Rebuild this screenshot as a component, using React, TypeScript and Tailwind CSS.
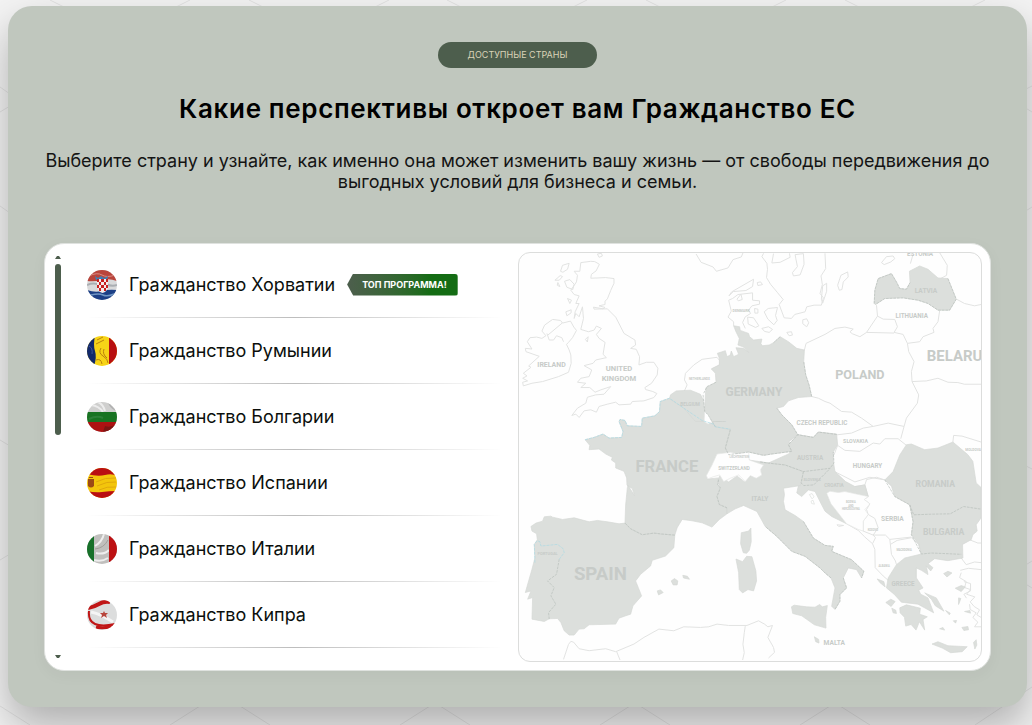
import type { ReactNode } from 'react';

interface Country {
  name: string;
  flag: ReactNode;
  top?: boolean;
}

const countries: Country[] = [
  {
    name: 'Гражданство Хорватии',
    top: true,
    flag: (
      <>
        <rect width="30" height="30" fill="#d9dadb" />
        <path d="M0 0h30v11Q22 8 15 10T0 11z" fill="#b9453c" />
        <path d="M2 6q8-4 13-1t13 0" stroke="#d98c84" fill="none" />
        <path d="M0 15q7-3 12 0M19 14q6 3 11 1" stroke="#aaaeb2" strokeWidth="2" fill="none" />
        <path d="M0 20q8 3 15 1t15-1v10H0z" fill="#1c3f86" />
        <path d="M4 25q8-2 12 0t11-1" stroke="#6f95c4" strokeWidth="1.5" fill="none" />
        <path d="M8 6l3 2 3-2 3 2 4-2-1 4H9z" fill="#3f7fb4" />
        <path d="M10 9h11v8q-1 5-5.500 6Q11 22 10 17z" fill="#f4ecec" />
        <path
          d="M10 9h2v3h-2zM14 9h3v3h-3zM19 9h2v3h-2zM12 12h2v3h-2zM17 12h2v3h-2zM10 15h2v3h-2zM14 15h3v3h-3zM19 15h2v3h-2zM12 18h2v3h-2zM17 18h2v3h-2z"
          fill="#c71f1f"
        />
      </>
    ),
  },
  {
    name: 'Гражданство Румынии',
    flag: (
      <>
        <rect width="30" height="30" fill="#f7d417" />
        <path d="M0 0h8q-2 9 0 15t-1 15H0z" fill="#12296b" />
        <path d="M22 0h8v30h-8z" fill="#b80f10" />
        <path d="M2 10q4 2 3 8" stroke="#3b5699" fill="none" />
        <path d="M14 12q-3 5 2 8t5 7M17 13q-2 5 3 9M10 4l6-3M9 8l8-4M9 24q5-2 6 4" stroke="#b9820d" fill="none" />
      </>
    ),
  },
  {
    name: 'Гражданство Болгарии',
    flag: (
      <>
        <rect width="30" height="30" fill="#cfcfce" />
        <path d="M4 3q8 1 12 7M11 0q5 2 7 9" stroke="#ececec" strokeWidth="2" fill="none" />
        <path d="M22 0q1 5 7 8" stroke="#b2b2b2" strokeWidth="2" fill="none" />
        <path d="M0 10h30v10H0z" fill="#187322" />
        <path d="M2 17q8-4 14-1" stroke="#2c7f37" strokeWidth="2" fill="none" />
        <path d="M0 20h30v10H0z" fill="#ad1212" />
        <path d="M18 24q5 2 12-2v8H16z" fill="#7d1512" />
      </>
    ),
  },
  {
    name: 'Гражданство Испании',
    flag: (
      <>
        <rect width="30" height="30" fill="#f3c60c" />
        <path d="M0 0h30v8q-5-3-12-1T0 6z" fill="#b90e12" />
        <path d="M0 23q8 2 15 1t15-1v7H0z" fill="#b90e12" />
        <path d="M9 14q9-5 20-4M10 18q10-5 19-4M12 22q8-4 17-3" stroke="#e0a80d" fill="none" />
        <path d="M1 11h6v7q-3 3-6 0zM2 9h4v1H2z" fill="#9b4a16" />
      </>
    ),
  },
  {
    name: 'Гражданство Италии',
    flag: (
      <>
        <rect width="30" height="30" fill="#c0bfbd" />
        <path d="M17 0q-2 8-9 12M9 19q8 2 13-3M7 26q8 2 14-2" stroke="#eeeeee" strokeWidth="2" fill="none" />
        <path d="M8 15q9-1 13-9" stroke="#a09e9a" fill="none" />
        <path d="M0 0h7v30H0z" fill="#177029" />
        <path d="M22 0h8v30h-8z" fill="#bd1113" />
      </>
    ),
  },
  {
    name: 'Гражданство Кипра',
    flag: (
      <>
        <rect width="30" height="30" fill="#dcdddd" />
        <path d="M1 8q6-1 11-4t11-2" stroke="#c01616" strokeWidth="4" fill="none" />
        <path d="M2 11q-1 10 6 13t20 0" stroke="#c01616" strokeWidth="2" fill="none" />
        <path d="M9 27q8 2 18-1" stroke="#c01616" strokeWidth="3" fill="none" />
        <path d="M4 12q10 2 22 10" stroke="#f5f5f5" strokeWidth="3" fill="none" />
        <path d="M17 11l1 2h3l-2 2 1 3-3-2-3 2 1-3-2-2h3z" fill="#b8453b" />
      </>
    ),
  },
];

const activeShapes = [
  // Portugal and Spain
  'M328 826L310 828 275 822 245 818 220 822 175 810 140 815 110 808 105 805 85 807 80 820 60 826 45 836 48 850 62 858 64 876 55 890 57 930 48 965 38 1000 28 1035 45 1030 35 1055 50 1050 48 1115 85 1122 100 1114 125 1113 135 1125 145 1150 160 1163 175 1163 190 1145 205 1144 220 1132 300 1130 310 1112 330 1105 345 1100 352 1075 378 1045 360 1000 375 980 405 955 410 938 450 925 475 900 478 862 440 859 415 856 380 861 345 843Z',
  // France
  'M328 826L330 771 335 720 337 712 357 744 350 722 334 712 333 690 325 670 300 660 300 645 287 636 290 628 270 618 250 603 220 605 222 592 208 575 235 568 262 558 280 570 318 568 322 550 310 520 313 514 328 517 335 533 378 535 380 510 418 503 432 490 434 460 462 450 505 480 560 517 595 528 600 536 645 543 642 570 630 600 640 620 605 640 577 693 610 690 607 710 615 720 605 746 612 770 635 780 635 798 612 815 590 838 560 825 530 819 500 815 485 840 478 862 440 859 415 856 380 861 345 843Z',
  // Belgium
  'M465 440L482 428 525 426 555 438 563 455 568 490 570 520 540 520 505 480 462 452Z',
  // Germany
  'M655 232L673 235 675 246 700 255 703 265 715 275 740 272 737 286 742 292 762 290 775 283 795 265 820 280 845 300 868 305 866 340 872 380 882 410 890 445 850 448 820 458 805 475 785 480 800 500 830 530 848 560 822 580 830 610 770 618 745 622 700 612 640 622 630 600 645 545 600 536 578 500 568 490 570 440 572 418 602 402 600 375 588 362 612 350 612 330 606 315 630 307 635 325 645 320 648 308 655 325 670 318 662 298 685 300 700 312 685 296 668 290 672 270 662 250Z',
  // Austria, Slovenia and Croatia
  'M700 636L760 645 822 617 828 605 820 590 848 560 895 568 910 552 965 558 968 590 955 612 955 640 960 671 992 701 1020 716 1050 711 1060 746 1020 738 935 736 945 760 970 796 995 828 950 806 930 790 920 771 900 731 880 726 860 746 845 735 850 713 800 700 765 660Z',
  // Italy
  'M635 798L635 780 612 770 605 746 615 720 607 700 613 684 640 702 665 684 688 702 705 684 740 680 735 642 765 646 810 651 865 671 860 700 856 713 805 721 808 740 805 761 810 786 840 803 865 821 895 871 930 893 955 896 950 911 1010 936 1047 971 1040 991 1025 966 1000 961 985 991 995 1021 975 1041 975 1061 960 1086 950 1076 960 1021 948 991 930 976 915 961 870 926 830 911 785 866 750 836 725 791 685 773 660 783Z',
  // Romania, Bulgaria and Greece
  'M1155 621L1175 590 1190 588 1230 605 1270 600 1315 582 1360 620 1375 640 1385 705 1400 719 1400 810 1385 831 1388 850 1375 861 1370 876 1344 890 1345 931 1300 939 1260 933 1240 948 1255 960 1248 970 1235 955 1240 981 1220 968 1205 961 1205 991 1225 1021 1212 1028 1218 1040 1240 1051 1257 1096 1210 1070 1160 1064 1138 1040 1115 1021 1120 991 1145 951 1170 931 1220 919 1212 890 1190 861 1195 821 1185 771 1140 746 1130 715 1110 696 1135 671Z',
  // Latvia
  'M1078 165L1080 125 1090 90 1130 75 1145 100 1155 120 1175 122 1186 102 1184 68 1215 52 1240 62 1270 88 1300 90 1325 152 1305 185 1270 185 1240 165 1210 155 1190 152 1165 148 1110 150 1082 168Z',
  // Corsica, Sardinia, Sicily, Balearics
  'M678 855L700 850 707 841 708 882 702 908 694 917 684 915 676 888Z',
  'M662 934L682 942 694 926 710 927 722 970 724 1000 715 1030 698 1026 682 1036 672 1026 670 975Z',
  'M829 1078L837 1073 875 1078 900 1079 914 1071 922 1078 937 1074 932 1110 933 1142 898 1132 860 1105 833 1098Z',
  'M467 1000l10-7 10 7-2 12-12 0zM502 983l14 3 6 9-18-4zM425 1030l10-3 8 8-14 7zM898 1168l13 8 1 11-10-4z',
  // Peloponnese, Evia, Crete and the Aegean
  'M1155 1081l20-9 42 10-2 18 23 8-13 8 5 32-16-25-10 25-15-17-16 5-4-27-13-13z',
  'M1230 1036L1265 1051 1288 1091 1262 1075 1250 1055Z',
  'M1252 1190l18-7 30 12 58 3-15 15-35 3-25-14z',
  'M1113 1065l15-10 13 7-12 15zM1131 1082l12 6 2 10-10-2zM1287 978l13-7 12 5-15 12zM1322 1022l18-8 12 4-12 14zM1332 1051l7 2-7 18zM1350 1092l16-3 2 8zM1293 1089l14 8-3 5zM1275 1144l10-4 5 8zM1342 1140l18-3 2 10-14 2zM1377 1185l8-8 2 16-6 12zM1316 1120l10-1-3 8zM1087 994l20 8 4 16-16-13z',
];

// Coastlines and borders of the remaining countries
const outlines = [
  // Great Britain
  'M195 42L225 38 237 39 251 47 241 67 227 77 225 89 270 87 295 90 295 104 285 126 275 151 268 158 268 168 250 172 268 177 262 181 233 176 235 182 275 181 300 206 320 245 325 255 358 275 360 290 345 300 362 303 372 325 370 350 392 342 415 342 427 360 425 380 408 405 388 418 390 424 412 430 424 436 415 448 385 458 350 460 345 468 310 470 300 462 275 468 250 475 242 492 225 485 205 488 190 508 180 498 168 502 185 480 210 465 215 447 240 440 265 438 285 415 255 425 238 432 222 418 195 418 210 405 185 402 195 390 220 385 228 365 205 352 232 345 240 335 272 328 262 318 268 282 250 270 242 258 257 240 242 233 235 245 218 250 195 243 203 210 200 175 190 205 180 195 175 210 178 190 190 165 180 165 190 142 175 138 165 125 182 100 185 80 175 68 192 68Z',
  // Ireland
  'M78 248L86 230 110 213 134 216 140 224 164 218 174 236 182 246 170 268 158 282 152 288 160 305 165 320 166 345 158 372 128 385 80 400 48 405 22 413 20 402 35 398 20 390 33 383 22 375 45 357 38 353 70 324 30 310 28 300 48 302 34 280 42 268 62 266 78 270 90 262Z',
  'M93 255L100 275 113 275 122 262 138 268 143 280M140 223L96 260',
  // Scottish isles
  'M134 68l6-18 20-6-5 18-14 9zM117 95l16-14 7 3-10 11zM124 110l2-8 6 12zM146 98l16-5 13 14-4 16-18-7zM155 150l12 5-5 10zM150 190l16-6 0 9-13 9zM209 273l8-8-2 16zM245 16l12-2 3 8-10 4z',
  // Netherlands
  'M505 432L515 410 507 395 510 375 535 350 560 333 605 327 614 338 612 350 588 362',
  // Denmark
  'M655 232L655 220 638 206 648 188 640 155 652 150 668 138 712 133 712 155 733 157 733 167 710 172 700 185 706 195 690 205 682 222 690 240M641 142L649 130 715 92 712 114 692 126 654 129ZM665 152l12-15 4 16-12 4z',
  'M697 206l18 2 16 24-10 5-22-10zM747 190l12-10 28-3-6 24 5 15-10 13-18-17zM740 240l20-5 12 8-10 9-14-3zM815 252l14-2 3 10-10 2zM863 214l12-3 6 12-6 12-12-9zM718 180l10 2 0 12-9 0zM726 102l10-2 6 8-14 3z',
  // Sweden and Norway
  'M542 16L557 41 593 55 603 68 638 58 653 33 678 25 683 13M745 14L740 24 755 44 757 62 754 87 766 107 786 131 804 153 792 168 807 208 829 210 839 198 870 190 875 175 897 170 919 170 925 148 915 135 922 108 918 82 932 60 930 14',
  'M840 18l25-3 2 32-12 32-20 3-3-10 15-18-5-25zM923 112l12-8 0 24-12 36-4-12zM978 80l20-10 2 15-15 15-4 23-8 2-5-15zM1100 42l15-18 20-2 5 8-12 10-20 8zM775 15l-5 28 25-2 30-15-2-12',
  // Baltic coast, Poland and the Czech Republic
  'M868 305L873 285 930 258 960 240 990 236 1015 242 1005 250 1012 256 1035 265 1055 252 1088 203 1085 170',
  'M1275 187L1270 220 1255 240 1258 252 1225 265 1215 280 1178 285M1088 203L1105 212 1140 213 1148 235 1138 252 1165 258 1178 285 1182 310 1198 340 1190 370 1192 400 1212 440 1208 465 1175 510 1168 535 1120 525 1075 535 1040 510 1010 492 980 490 945 465 930 460 910 450 890 445M1055 252L1138 254',
  'M1192 400L1235 398 1270 390 1300 402 1330 403 1350 408 1400 408M1326 152L1350 165 1380 172 1400 168M1275 12L1298 50 1296 80 1278 90M1187 45L1195 17',
  // Slovakia and Hungary
  'M848 560L895 568 910 552 968 560 1010 555 1045 540 1075 535M968 592L990 607 1035 610 1075 585 1095 588 1110 572 1150 572 1175 592M1158 572L1168 535M957 621L968 592M960 671L967 675 1020 702 1065 688 1110 696',
  // Serbia, Montenegro, Albania, Macedonia
  'M1020 716L1050 711 1055 695 1085 688 1110 696M1050 711L1060 746 1048 755 1065 768 1055 785 1060 800 1080 812 1090 840 1075 862',
  'M995 828L1030 848 1050 868 1073 888 1082 870 1075 862 1045 850 1045 820 1060 800M1075 862L1112 862 1125 875 1190 868M1073 888L1080 905 1081 960 1105 985 1120 998M1125 875L1130 920 1142 940 1145 951M1127 890L1147 878 1190 870 1212 890 1220 919',
  // Moldova, Turkey
  'M1315 582L1317 562 1342 564 1400 582M1340 931L1355 951 1380 943 1400 945M1365 876L1390 886 1400 886M1337 968L1362 962 1400 966M1340 975L1335 990 1355 1002 1350 1020 1368 1026 1356 1040 1381 1048 1367 1063 1379 1077 1395 1087 1387 1102 1400 1110M1365 1070L1367 1086 1385 1096 1375 1110 1390 1124 1380 1138 1400 1138M1348 1002L1368 1008 1368 1030 1348 1040 1356 1052',
  // North Africa
  'M143 1236L158 1191 165 1182 173 1184 190 1204 220 1210 270 1204 300 1213 355 1190 385 1170 430 1145 475 1150 505 1138 555 1140 580 1138 605 1130 640 1134 695 1134 730 1120 748 1130 758 1138 772 1134 758 1170 775 1200 778 1215 760 1232M303 1213l10 25M690 1136l-3 20-4 35 4 25-5 22',
  // Small Adriatic islands
  'M966 831l20 2-15 3z',
];

// Darker frontiers over the filled countries
const frontiers = [
  'M328 826L345 843 380 861 415 856 440 859 478 862',
  'M130 935L122 980 95 1000 115 1020 105 1045 120 1070 98 1095 100 1115',
  'M645 545L630 600 640 620 700 612 745 622 770 618 830 610 820 590 848 560 830 530 800 500 785 480',
  'M563 440L568 490 578 500 600 536M565 435L575 415 602 402',
  'M890 445L882 410 872 380 866 340M795 265L775 283',
  'M610 695L607 710 615 720 605 746 612 770 635 780',
  'M735 642L765 646 810 651 865 671 945 661 957 645 955 612M865 671L858 705 866 713 896 711 911 696 945 662M965 559L910 552 895 568 848 560',
  'M1110 696L1140 746 1185 771 1197 801 1252 799 1307 798 1347 776 1400 784M1185 771L1195 821 1190 861 1220 919 1250 916 1300 918 1340 920',
  'M1078 165L1080 125 1090 90 1130 75 1145 100 1155 120 1175 122 1186 102M1300 90L1325 152 1305 185 1270 185 1240 165 1210 155 1190 152 1165 148 1110 150 1082 168',
  'M865 821L895 871 930 893 955 896 950 911 1010 936 1047 971 1040 991M985 991L995 1021 975 1041 975 1061 960 1086M948 991L930 976 915 961 870 926 830 911 785 866 750 836',
];

// Coast segments drawn with a light blue tint
const shoreline = [
  'M208 575L235 568 262 558 280 570 318 568 322 550 310 520 313 514 328 517 335 533 378 535 380 510 418 503 432 490 434 460 462 450 505 480 560 517 595 528 600 536 645 543',
  'M57 945L55 890 64 879 72 882 75 895 125 890 142 903 145 915 130 935',
];

interface MapLabel {
  text: string;
  x: number;
  y: number;
  size: number;
}

const mapLabels: MapLabel[] = [
  { text: 'IRELAND', x: 107, y: 356, size: 21 },
  { text: 'UNITED', x: 310, y: 367, size: 23 },
  { text: 'KINGDOM', x: 310, y: 397, size: 23 },
  { text: 'DENMARK', x: 678, y: 192, size: 11 },
  { text: 'NETHERLANDS', x: 552, y: 394, size: 9 },
  { text: 'BELGIUM', x: 524, y: 473, size: 14 },
  { text: 'LUXEMBOURG', x: 612, y: 522, size: 6 },
  { text: 'GERMANY', x: 716, y: 443, size: 36 },
  { text: 'POLAND', x: 1035, y: 393, size: 38 },
  { text: 'CZECH REPUBLIC', x: 921, y: 532, size: 19 },
  { text: 'SLOVAKIA', x: 1022, y: 584, size: 16 },
  { text: 'ESTONIA', x: 1216, y: 23, size: 19 },
  { text: 'LATVIA', x: 1234, y: 132, size: 20 },
  { text: 'LITHUANIA', x: 1191, y: 210, size: 19 },
  { text: 'BELARUS', x: 1334, y: 337, size: 45 },
  { text: 'MOLDOVA', x: 1376, y: 610, size: 10 },
  { text: 'FRANCE', x: 454, y: 671, size: 50 },
  { text: 'SWITZERLAND', x: 656, y: 666, size: 14 },
  { text: 'LIECHTENSTEIN', x: 672, y: 631, size: 8 },
  { text: 'AUSTRIA', x: 885, y: 637, size: 19 },
  { text: 'SLOVENIA', x: 891, y: 699, size: 11 },
  { text: 'CROATIA', x: 957, y: 718, size: 14 },
  { text: 'HUNGARY', x: 1058, y: 660, size: 19 },
  { text: 'ROMANIA', x: 1262, y: 718, size: 26 },
  { text: 'BOSNIA', x: 1008, y: 764, size: 8 },
  { text: 'AND', x: 1008, y: 776, size: 8 },
  { text: 'HERZEGOVINA', x: 1008, y: 788, size: 8 },
  { text: 'SERBIA', x: 1133, y: 820, size: 20 },
  { text: 'KOSOVO', x: 1074, y: 850, size: 8 },
  { text: 'BULGARIA', x: 1287, y: 863, size: 26 },
  { text: 'MACEDONIA', x: 1168, y: 910, size: 8 },
  { text: 'ALBANIA', x: 1108, y: 958, size: 8 },
  { text: 'GREECE', x: 1165, y: 1015, size: 19 },
  { text: 'ITALY', x: 734, y: 758, size: 20 },
  { text: 'PORTUGAL', x: 95, y: 922, size: 12 },
  { text: 'SPAIN', x: 254, y: 996, size: 56 },
  { text: 'MALTA', x: 958, y: 1193, size: 20 },
];

function EuropeMap() {
  return (
    <svg
      viewBox="9 12 1392 1230"
      preserveAspectRatio="xMidYMid slice"
      className="h-full w-full"
      role="img"
      aria-label="Карта Европы"
      strokeLinejoin="round"
    >
      <g fill="none" stroke="#e2e3e2" strokeWidth="3">
        {outlines.map((d) => (
          <path key={d} d={d} />
        ))}
      </g>
      <g fill="#dcdfdc" stroke="#d4d8d5" strokeWidth="2">
        {activeShapes.map((d) => (
          <path key={d} d={d} />
        ))}
      </g>
      {/* Switzerland, Luxembourg and Bosnia stay white */}
      <g fill="#fefefe" stroke="#e6e7e6" strokeWidth="2">
        <path d="M605 618L645 613 665 617 700 612 702 636 745 651 735 666 740 681 723 691 705 683 690 701 670 681 645 691 625 701 613 681 595 686 577 693 573 683 590 651Z" />
        <path d="M568 490L580 502 589 522 578 528 566 520Z" />
        <path d="M935 736L945 730 970 734 990 731 1060 746 1048 755 1065 768 1050 785 1060 800 1045 820 1045 850 1030 845 995 828 970 796 948 768Z" />
      </g>
      <path
        d="M883 740l8-3 6 10-6 6zM888 760l6-3 4 12-8-2z"
        fill="none"
        stroke="#dcdfdc"
        strokeWidth="2"
      />
      <g fill="none" stroke="#b7beb9" strokeWidth="2" strokeDasharray="8 3">
        {frontiers.map((d) => (
          <path key={d} d={d} />
        ))}
      </g>
      <g fill="none" stroke="#a9d9e4" strokeWidth="2" strokeDasharray="9 3">
        {shoreline.map((d) => (
          <path key={d} d={d} />
        ))}
      </g>
      <g fill="#c7cbc8" textAnchor="middle" className="font-['Roboto',sans-serif] font-bold">
        {mapLabels.map((label) => (
          <text key={label.text} x={label.x} y={label.y} fontSize={label.size}>
            {label.text}
          </text>
        ))}
      </g>
    </svg>
  );
}

function PageBackdrop() {
  return (
    <svg
      className="absolute inset-0 -z-10 h-full w-full"
      viewBox="0 0 1032 725"
      preserveAspectRatio="none"
      fill="none"
      stroke="#e2e2e2"
      aria-hidden="true"
    >
      <path d="M50 0l14 7M190 0l-14 7M249 0l14 7M389 0l-14 7M447 0l14 7M587 0l-14 7M646 0l14 7M786 0l-14 7M845 0l14 7M985 0l-14 7" />
      <path d="M0 87l10 7M0 112l10-6M0 206l10 7M0 440l10 6M0 560l10-6M1024 90l8-4M1024 107l8 5M1024 212l8-5M1024 465l8 4M1024 566l8-5M1024 583l8 5" />
      <path d="M0 706l30 19M170 725l30-19M240 706l30 19M400 725l30-19M440 706l30 19M600 725l30-19M640 706l30 19M800 725l30-19M840 706l30 19M975 725l57-38" />
    </svg>
  );
}

function CountryList() {
  return (
    <div className="flex min-w-0 flex-1 gap-6">
      <div className="flex w-[10px] shrink-0 flex-col items-center pt-1 pb-1" aria-hidden="true">
        <svg width="6" height="3" viewBox="0 0 6 3" fill="#4d5e4d">
          <path d="M0 3L2 0h2l2 3z" />
        </svg>
        <div className="mt-[5px] h-[171px] w-[6px] rounded-full bg-[#4d5e4d]" />
        <svg className="mt-auto" width="6" height="3" viewBox="0 0 6 3" fill="#4d5e4d">
          <path d="M0 0h6L4 3H2z" />
        </svg>
      </div>
      <ul className="min-w-0 flex-1">
        {countries.map((country) => (
          <li key={country.name}>
            <button type="button" className="flex h-[65px] w-full items-center gap-3 text-left">
              <svg width="30" height="30" viewBox="0 0 30 30" className="shrink-0 rounded-full" aria-hidden="true">
                {country.flag}
              </svg>
              <span className="text-lg text-[#0b0f0c]">{country.name}</span>
              {country.top && (
                <span className="flex h-[22px] items-center rounded-r-[3px] bg-linear-to-r from-[#4d5e4d] to-[#146c14] to-75% pr-[11px] pl-[15px] text-[9px] font-bold text-white [clip-path:polygon(6px_0,100%_0,100%_100%,6px_100%,0_50%)]">
                  ТОП ПРОГРАММА!
                </span>
              )}
            </button>
            <div className="h-px bg-linear-to-r from-transparent via-[#bdbdbd] to-transparent" />
          </li>
        ))}
      </ul>
    </div>
  );
}

export default function App() {
  return (
    <main className="relative isolate min-h-screen overflow-hidden bg-[#f3f3f3] pt-[6px] pr-[5px] pb-[18px] pl-2 font-['Inter',sans-serif]">
      <PageBackdrop />
      <section className="rounded-3xl bg-[#c0c7be] px-9 py-9 shadow-[0_20px_40px_rgba(0,0,0,0.28)]">
        <header className="flex flex-col items-center text-center">
          <span className="flex h-[26px] items-center rounded-full bg-[#4d5e4d] px-[30px] text-[9px] text-[#d9d3b8]">
            ДОСТУПНЫЕ СТРАНЫ
          </span>
          <h2 className="mt-6 text-[26px] leading-[34px] font-semibold tracking-wide text-black">
            Какие перспективы откроет вам Гражданство ЕС
          </h2>
          <p className="mt-6 text-lg leading-[21px] text-[#141414]">
            Выберите страну и узнайте, как именно она может изменить вашу жизнь — от свободы передвижения до
            выгодных условий для бизнеса и семьи.
          </p>
        </header>

        <div className="mt-[51px] flex gap-4 rounded-[20px] border border-[#dfe2df] bg-white p-2 shadow-[0_4px_16px_rgba(0,0,0,0.04)]">
          <CountryList />
          <div className="h-[410px] w-1/2 shrink-0 overflow-hidden rounded-xl border border-[#dcdddc] bg-[#fefefe]">
            <EuropeMap />
          </div>
        </div>
      </section>
    </main>
  );
}
